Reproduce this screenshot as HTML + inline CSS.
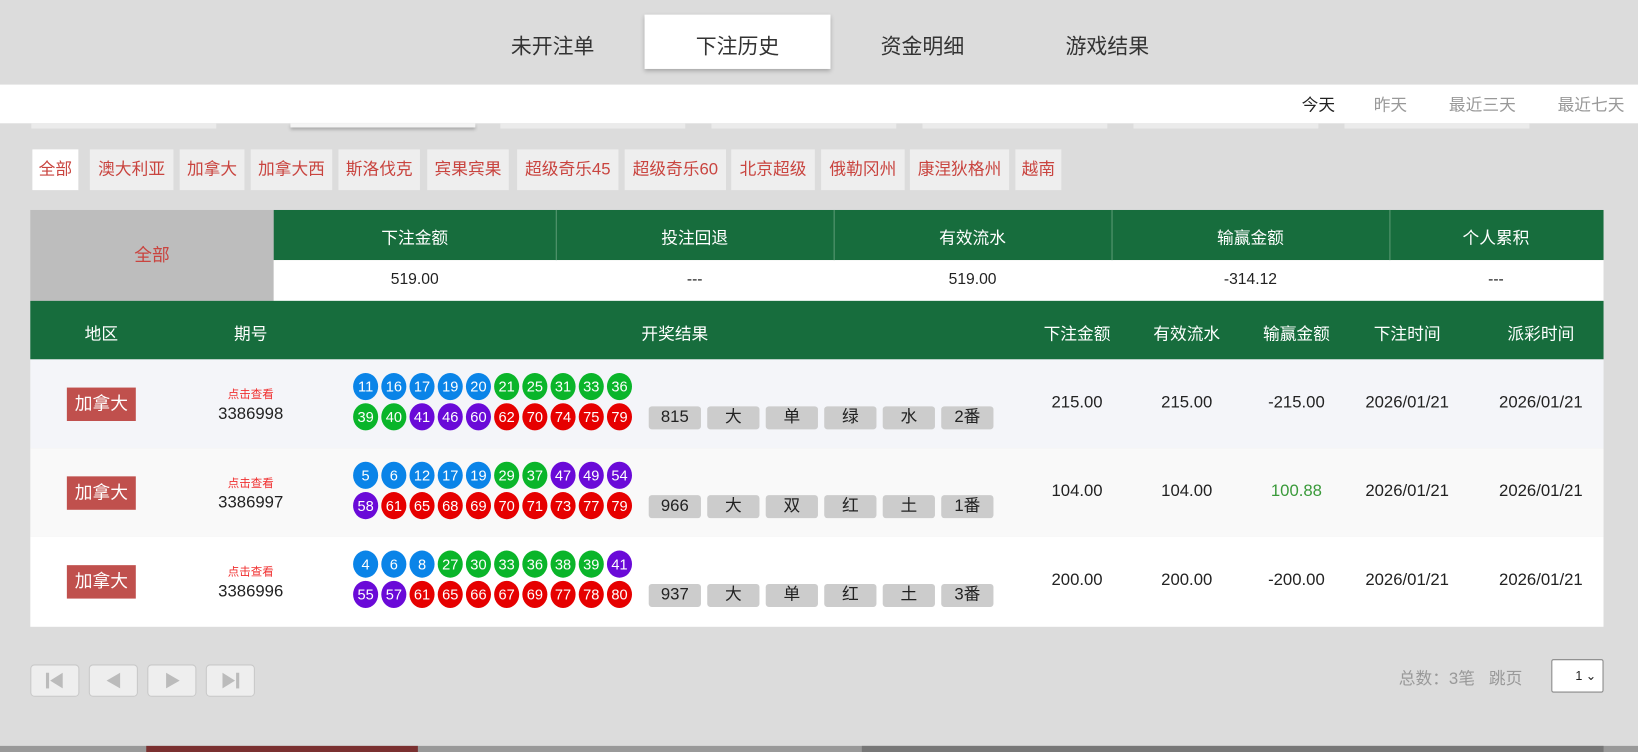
<!DOCTYPE html>
<html><head><meta charset="utf-8"><style>
*{margin:0;padding:0;box-sizing:border-box}
body{width:1638px;height:751px;overflow:hidden;background:#dcdcdc;font-family:"Liberation Sans","Noto Sans CJK SC",sans-serif;position:relative;color:#222}
#w{position:absolute;left:0;top:0;width:1568px;height:719px;transform:scale(1.04465);transform-origin:0 0}
.a{position:absolute}
.c{position:absolute;transform:translateX(-50%);white-space:nowrap;text-align:center}
.tab{font-size:20px;color:#333;top:28px}
.flt{position:absolute;top:143px;height:39px;line-height:39px;background:#eee;color:#c9443f;font-size:16px;text-align:center}
.g{background:#176d3d;color:#fff}
.ball{position:absolute;width:24px;height:26px;border-radius:50%;color:#fff;font-size:14px;line-height:26px;text-align:center}
.b{background:#0a84e8}.gr{background:#0ab52a}.p{background:#6a0ad8}.r{background:#e60000}
.tag{position:absolute;width:50px;height:22px;background:#ccc;border-radius:3px;font-size:16px;line-height:22px;text-align:center;color:#222}
.reg{position:absolute;left:64px;width:66px;height:32px;background:#c0504d;color:#fff;font-size:17px;line-height:32px;text-align:center}
.pb{position:absolute;top:636px;width:47px;height:31px;border:1px solid #c8c8c8;border-radius:4px;background:#eee}
</style></head><body><div id="w">
<div class="a" style="left:617px;top:14px;width:178px;height:52px;background:#fff;box-shadow:0 2px 4px rgba(0,0,0,.25)"></div>
<div class="c tab" style="left:529px">未开注单</div>
<div class="c tab" style="left:706px">下注历史</div>
<div class="c tab" style="left:883px">资金明细</div>
<div class="c tab" style="left:1060px">游戏结果</div>
<div class="a" style="left:0;top:81px;width:1568px;height:37px;background:#fff"></div>
<div class="c" style="left:1262px;top:87px;font-size:16px;color:#222">今天</div>
<div class="c" style="left:1331px;top:87px;font-size:16px;color:#999">昨天</div>
<div class="c" style="left:1419px;top:87px;font-size:16px;color:#999">最近三天</div>
<div class="c" style="left:1523px;top:87px;font-size:16px;color:#999">最近七天</div>
<div class="a" style="left:30px;top:118px;width:177px;height:5px;background:#ebebeb"></div>
<div class="a" style="left:278px;top:118px;width:177px;height:4px;background:#f4f4f4;box-shadow:0 2px 3px rgba(0,0,0,.25)"></div>
<div class="a" style="left:479px;top:118px;width:177px;height:5px;background:#ebebeb"></div>
<div class="a" style="left:681px;top:118px;width:177px;height:5px;background:#ebebeb"></div>
<div class="a" style="left:883px;top:118px;width:177px;height:5px;background:#ebebeb"></div>
<div class="a" style="left:1085px;top:118px;width:177px;height:5px;background:#ebebeb"></div>
<div class="a" style="left:1287px;top:118px;width:177px;height:5px;background:#ebebeb"></div>

<div class="flt" style="left:31px;width:44px;background:#fff">全部</div>
<div class="flt" style="left:86px;width:80px">澳大利亚</div>
<div class="flt" style="left:172px;width:62px">加拿大</div>
<div class="flt" style="left:240px;width:78px">加拿大西</div>
<div class="flt" style="left:324px;width:78px">斯洛伐克</div>
<div class="flt" style="left:409px;width:78px">宾果宾果</div>
<div class="flt" style="left:495px;width:97px">超级奇乐45</div>
<div class="flt" style="left:598px;width:97px">超级奇乐60</div>
<div class="flt" style="left:700px;width:80px">北京超级</div>
<div class="flt" style="left:786px;width:80px">俄勒冈州</div>
<div class="flt" style="left:871px;width:95px">康涅狄格州</div>
<div class="flt" style="left:972px;width:44px">越南</div>

<div class="a" style="left:29px;top:201px;width:233px;height:87px;background:#bdbdbd;color:#c9443f;font-size:17px;line-height:87px;text-align:center">全部</div>
<div class="a g" style="left:262px;top:201px;width:1273px;height:48px"></div>
<div class="a" style="left:262px;top:249px;width:1273px;height:39px;background:#fff"></div>
<div class="a" style="left:532px;top:201px;width:1px;height:48px;background:#5a9a74"></div>
<div class="a" style="left:798px;top:201px;width:1px;height:48px;background:#5a9a74"></div>
<div class="a" style="left:1064px;top:201px;width:1px;height:48px;background:#5a9a74"></div>
<div class="a" style="left:1330px;top:201px;width:1px;height:48px;background:#5a9a74"></div>
<div class="c" style="left:397px;top:214px;color:#fff;font-size:16px">下注金额</div>
<div class="c" style="left:665px;top:214px;color:#fff;font-size:16px">投注回退</div>
<div class="c" style="left:931px;top:214px;color:#fff;font-size:16px">有效流水</div>
<div class="c" style="left:1197px;top:214px;color:#fff;font-size:16px">输赢金额</div>
<div class="c" style="left:1432px;top:214px;color:#fff;font-size:16px">个人累积</div>
<div class="c" style="left:397px;top:259px;font-size:15px">519.00</div>
<div class="c" style="left:665px;top:259px;font-size:15px">---</div>
<div class="c" style="left:931px;top:259px;font-size:15px">519.00</div>
<div class="c" style="left:1197px;top:259px;font-size:15px">-314.12</div>
<div class="c" style="left:1432px;top:259px;font-size:15px">---</div>

<div class="a g" style="left:29px;top:288px;width:1506px;height:56px"></div>
<div class="c" style="left:97px;top:306px;color:#fff;font-size:16px">地区</div>
<div class="c" style="left:240px;top:306px;color:#fff;font-size:16px">期号</div>
<div class="c" style="left:646px;top:306px;color:#fff;font-size:16px">开奖结果</div>
<div class="c" style="left:1031px;top:306px;color:#fff;font-size:16px">下注金额</div>
<div class="c" style="left:1136px;top:306px;color:#fff;font-size:16px">有效流水</div>
<div class="c" style="left:1241px;top:306px;color:#fff;font-size:16px">输赢金额</div>
<div class="c" style="left:1347px;top:306px;color:#fff;font-size:16px">下注时间</div>
<div class="c" style="left:1475px;top:306px;color:#fff;font-size:16px">派彩时间</div>

<div class="a" style="left:29px;top:344px;width:1506px;height:85px;background:#f4f5f9"></div>
<div class="a" style="left:29px;top:429px;width:1506px;height:85px;background:#f9f9f9"></div>
<div class="a" style="left:29px;top:514px;width:1506px;height:86px;background:#fff"></div>

<div id="rows"></div>

<div class="pb" style="left:29px"><svg width="45" height="29"><rect x="14" y="7" width="3" height="15" fill="#bbb"/><path d="M18 14.5 L30 7 V22Z" fill="#bbb"/></svg></div>
<div class="pb" style="left:85px"><svg width="45" height="29"><path d="M16 14.5 L29 7 V22Z" fill="#bbb"/></svg></div>
<div class="pb" style="left:141px"><svg width="45" height="29"><path d="M30 14.5 L17 7 V22Z" fill="#bbb"/></svg></div>
<div class="pb" style="left:197px"><svg width="45" height="29"><path d="M27 14.5 L15 7 V22Z" fill="#bbb"/><rect x="28" y="7" width="3" height="15" fill="#bbb"/></svg></div>
<div class="a" style="left:1339px;top:636px;font-size:16px;color:#999">总数：3笔&nbsp;&nbsp;&nbsp;跳页</div>
<div class="a" style="left:1485px;top:631px;width:50px;height:32px;background:#fff;border:1px solid #888;border-radius:2px;font-size:12px;line-height:30px;padding-left:22px">1 ⌄</div>

<div class="a" style="left:0;top:714px;width:1568px;height:6px;background:#999"></div>
<div class="a" style="left:140px;top:714px;width:260px;height:6px;background:#7a3030"></div>
<div class="a" style="left:825px;top:714px;width:710px;height:6px;background:#777"></div>
</div>
<script>
var R=[
{y:344,reg:"加拿大",id:"3386998",b1:[[11,'b'],[16,'b'],[17,'b'],[19,'b'],[20,'b'],[21,'gr'],[25,'gr'],[31,'gr'],[33,'gr'],[36,'gr']],
b2:[[39,'gr'],[40,'gr'],[41,'p'],[46,'p'],[60,'p'],[62,'r'],[70,'r'],[74,'r'],[75,'r'],[79,'r']],t:["815","大","单","绿","水","2番"],v:["215.00","215.00","-215.00"]},
{y:429,reg:"加拿大",id:"3386997",b1:[[5,'b'],[6,'b'],[12,'b'],[17,'b'],[19,'b'],[29,'gr'],[37,'gr'],[47,'p'],[49,'p'],[54,'p']],
b2:[[58,'p'],[61,'r'],[65,'r'],[68,'r'],[69,'r'],[70,'r'],[71,'r'],[73,'r'],[77,'r'],[79,'r']],t:["966","大","双","红","土","1番"],v:["104.00","104.00","100.88"]},
{y:514,reg:"加拿大",id:"3386996",b1:[[4,'b'],[6,'b'],[8,'b'],[27,'gr'],[30,'gr'],[33,'gr'],[36,'gr'],[38,'gr'],[39,'gr'],[41,'p']],
b2:[[55,'p'],[57,'p'],[61,'r'],[65,'r'],[66,'r'],[67,'r'],[69,'r'],[77,'r'],[78,'r'],[80,'r']],t:["937","大","单","红","土","3番"],v:["200.00","200.00","-200.00"]}];
var h="";
R.forEach(function(r){var y=r.y;
h+='<div class="reg" style="top:'+(y+27)+'px">'+r.reg+'</div>';
h+='<div class="c" style="left:240px;top:'+(y+25)+'px;font-size:11px;color:#f03030">点击查看</div>';
h+='<div class="c" style="left:240px;top:'+(y+44)+'px;font-size:16px">'+r.id+'</div>';
r.b1.forEach(function(b,i){h+='<div class="ball '+b[1]+'" style="left:'+(338+i*27)+'px;top:'+(y+13)+'px">'+b[0]+'</div>'});
r.b2.forEach(function(b,i){h+='<div class="ball '+b[1]+'" style="left:'+(338+i*27)+'px;top:'+(y+42)+'px">'+b[0]+'</div>'});
r.t.forEach(function(t,i){h+='<div class="tag" style="left:'+(621+i*56)+'px;top:'+(y+45)+'px">'+t+'</div>'});
var cs=[1031,1136,1241];r.v.forEach(function(v,i){h+='<div class="c" style="left:'+cs[i]+'px;top:'+(y+33)+'px;font-size:16px;'+(v=="100.88"?'color:#3a9a3a':'')+'">'+v+'</div>'});
h+='<div class="c" style="left:1347px;top:'+(y+33)+'px;font-size:16px">2026/01/21</div>';
h+='<div class="c" style="left:1475px;top:'+(y+33)+'px;font-size:16px">2026/01/21</div>';
});
document.getElementById("rows").innerHTML=h;
</script>
</body></html>
